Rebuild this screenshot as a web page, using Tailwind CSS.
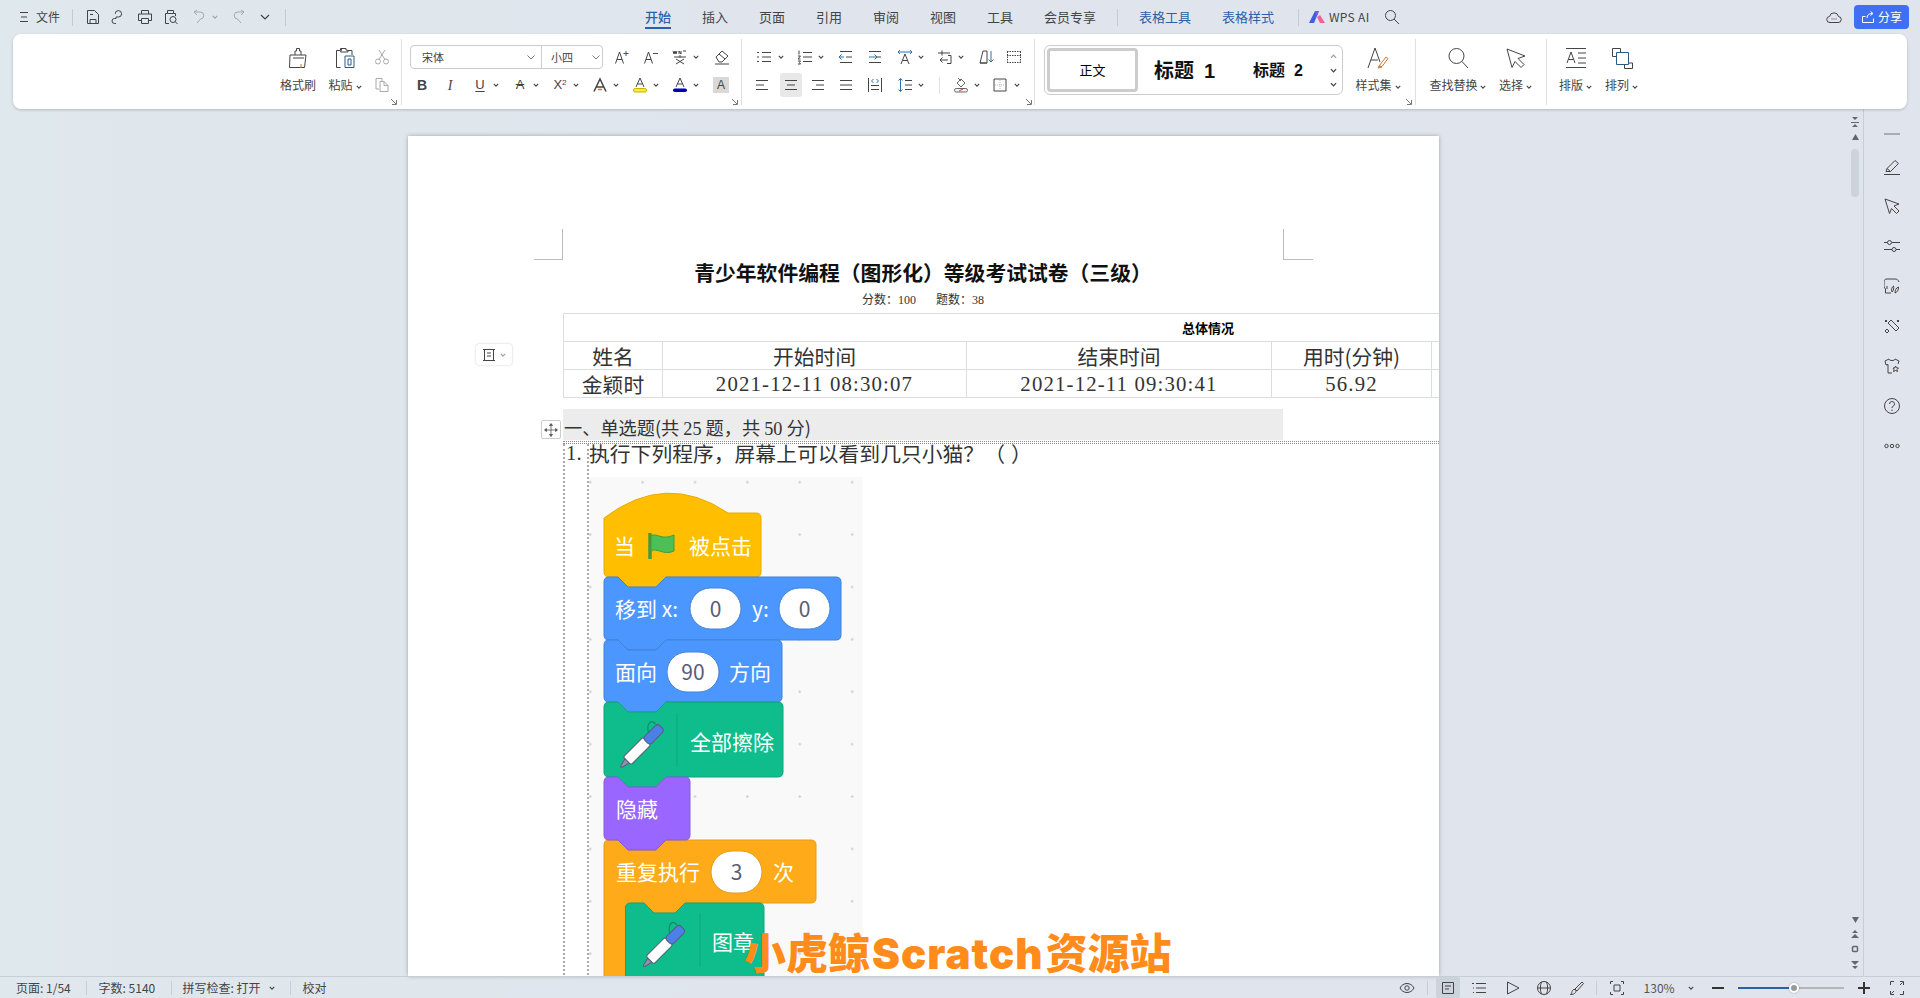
<!DOCTYPE html>
<html lang="zh-CN">
<head>
  <meta charset="UTF-8" />
  <title>WPS 文字</title>
  <script src="https://cdn.jsdelivr.net/npm/@tailwindcss/browser@4"></script>
</head>
<body class="relative w-[1920px] h-[998px] overflow-hidden flex flex-col bg-[linear-gradient(90deg,#dfe8ec,#e0e5ed_40%)] text-[#444] font-['Noto_Sans_CJK_SC','Noto_Sans',sans-serif]">
  <svg class="hidden">
    <symbol id="caret" viewBox="0 0 6 6"><path d="M.8 1.8 3 4.2l2.2-2.4" fill="none" stroke="#444" stroke-width="1.1"/></symbol>
    <symbol id="launch" viewBox="0 0 8 8"><path d="M1 1l5 5M6.5 2v4.5H2" fill="none" stroke="#777"/></symbol>
  </svg>

  <!-- title bar -->
  <header class="h-[34px] shrink-0 flex items-center pl-[20px] text-[12px]">
    <svg class="w-[8px] h-[10px]" viewBox="0 0 8 10" stroke="#444"><path d="M0 .5h8M1 5h6M0 9.5h8"/></svg>
    <span class="ml-[8px] w-[24px]">文件</span>
    <span class="ml-[12px] w-px h-[17px] bg-[#c5cbd2]"></span>
    <svg class="ml-[12px] w-[16px] h-[16px]" viewBox="0 0 16 16" fill="none" stroke="#444"><path d="M2.5 1.5h7l4 4v9h-11zM5 14.5v-4h6v4M5 5.5h3"/></svg>
    <svg class="ml-[9px] w-[16px] h-[16px]" viewBox="0 0 16 16" fill="none" stroke="#444"><path d="M6 9.5V8h2.5a3.2 3.2 0 1 0-3.3-3.2M6 9.5H4.5a2.5 2.5 0 0 0 0 5H6"/></svg>
    <svg class="ml-[11px] w-[16px] h-[16px]" viewBox="0 0 16 16" fill="none" stroke="#444"><path d="M4.5 5V1.5h7V5M4.5 11.5h-3V5h13v6.500h-3M4.500 9.500h7v5h-7z"/></svg>
    <svg class="ml-[10px] w-[16px] h-[16px]" viewBox="0 0 16 16" fill="none" stroke="#444"><path d="M6 14.500H2.500V4.500h2V1.500h6v3h2V7M4.500 4.500h6"/><circle cx="10" cy="10.500" r="3"/><path d="m12.200 12.700 2.300 2.300"/></svg>
    <svg class="ml-[12px] w-[16px] h-[16px]" viewBox="0 0 16 16" fill="none" stroke="#a3a9b0"><path d="M3 3h6a3.500 3.500 0 0 1 .5 7L6 14M3 3l3-2M3 3l3 3"/></svg>
    <svg class="ml-[5px] w-[6px] h-[6px] opacity-40"><use href="#caret"/></svg>
    <svg class="ml-[13px] w-[16px] h-[16px]" viewBox="0 0 16 16" fill="none" stroke="#a3a9b0"><path d="M13 3H7a3.500 3.500 0 0 0-.5 7l3.500 4M13 3l-3-2M13 3l-3 3"/></svg>
    <svg class="ml-[12px] w-[12px] h-[12px]" viewBox="0 0 12 12" fill="none" stroke="#444" stroke-width="1.200"><path d="m2 4 4 4 4-4"/></svg>
    <span class="ml-[14px] w-px h-[17px] bg-[#c5cbd2]"></span>

    <nav class="contents text-[13px]">
      <a class="ml-[359px] relative w-[26px] font-medium text-[#2b5fa8]">开始<span class="absolute left-0 right-0 top-[20px] h-[2px] bg-[#2b5fa8]"></span></a>
      <a class="ml-[31px] w-[26px]">插入</a>
      <a class="ml-[31px] w-[26px]">页面</a>
      <a class="ml-[31px] w-[26px]">引用</a>
      <a class="ml-[31px] w-[26px]">审阅</a>
      <a class="ml-[31px] w-[26px]">视图</a>
      <a class="ml-[31px] w-[26px]">工具</a>
      <a class="ml-[31px] w-[52px]">会员专享</a>
      <span class="ml-[21px] w-px h-[17px] bg-[#c5cbd2]"></span>
      <a class="ml-[21px] w-[52px] text-[#2b5fa8]">表格工具</a>
      <a class="ml-[31px] w-[52px] text-[#2b5fa8]">表格样式</a>
      <span class="ml-[24px] w-px h-[17px] bg-[#c5cbd2]"></span>
    </nav>
    <svg class="ml-[10px] w-[16px] h-[14px]" viewBox="0 0 16 14"><path d="M0 13 6 1h4L5 13z" fill="#3d5fe0"/><path d="M6 1h4l-2 5z" fill="#7b5cf0"/><path d="m8 7 3 6h5l-5-8z" fill="#f0609a"/></svg>
    <span class="ml-[4px] w-[40px] text-[12px] tracking-[.3px] whitespace-nowrap">WPS AI</span>
    <svg class="ml-[15px] w-[16px] h-[16px]" viewBox="0 0 16 16" fill="none" stroke="#444"><circle cx="6.500" cy="6.500" r="5"/><path d="m10 10 5 5"/></svg>
    <svg class="ml-auto w-[16px] h-[14px]" viewBox="0 0 16 14" fill="none" stroke="#444"><path d="M4 12.500a3 3 0 0 1-.5-6 4.600 4.600 0 0 1 9 0 3 3 0 0 1-.5 6z"/><path d="M5.500 9h1M7.500 9h1M9.500 9h1"/></svg>
    <a class="ml-[12px] mr-[11px] w-[55px] h-[24px] rounded-[4px] bg-[#3f6ff2] text-white flex items-center justify-center gap-[3px]">
      <svg class="w-[14px] h-[14px]" viewBox="0 0 14 14" fill="none" stroke="#fff"><path d="M12.500 8.500v4h-11v-6h3M6 8c0-3 2-4.500 5-4.500M9.500 1.500l2.500 2-2.500 2"/></svg>
      分享
    </a>
  </header>

  <!-- ribbon -->
  <section class="relative z-10 ml-[13px] w-[1894px] h-[75px] shrink-0 flex items-start rounded-[8px] bg-white shadow-[0_1px_3px_rgba(0,0,0,.2)] pl-[267px] text-[12px]">
    <div class="w-[36px] flex flex-col items-center pt-[13px]">
      <svg class="w-[22px] h-[22px]" viewBox="0 0 22 22" fill="none" stroke="#444"><path d="M8 8V4h1.500V1.500h3V4H14v4M3 8h16l-1.500 12.500h-15zM6 11h11" /><path d="M14 21v-4" stroke="#c77a3a"/></svg>
      <span class="mt-[8px] leading-[16px] whitespace-nowrap">格式刷</span>
    </div>
    <div class="ml-[12px] w-[34px] flex flex-col items-center pt-[13px]">
      <svg class="w-[22px] h-[22px]" viewBox="0 0 22 22" fill="none" stroke="#444"><path d="M6.500 20.500h-4V3.500h4M14 3.500h4V8M6.500 3.500V1.500h2M8 1.500h4V3l2 .5V5H6.500z"/><path d="M11 9h9v11.500h-9z" stroke="#2c5a85"/><path d="M14 12v6h3v-6z" stroke="#2c5a85"/></svg>
      <span class="mt-[8px] leading-[16px] whitespace-nowrap">粘贴<svg class="inline w-[6px] h-[6px] ml-[3px]"><use href="#caret"/></svg></span>
    </div>
    <div class="ml-[10px] w-[20px] flex flex-col items-center pt-[15px] gap-[12px]">
      <svg class="w-[16px] h-[16px]" viewBox="0 0 16 16" fill="none" stroke="#aaa"><circle cx="4" cy="12.500" r="2.500"/><circle cx="12" cy="12.500" r="2.500"/><path d="M5 10.500 11 1M11 10.500 5 1"/></svg>
      <svg class="w-[16px] h-[16px]" viewBox="0 0 16 16" fill="none" stroke="#aaa"><path d="M5 12H2V1.500h6V4M6 4.500h4l4 4v6H6zM10 4.500v4h4"/></svg>
    </div>
    <span class="ml-[9px] mt-[5px] w-px h-[66px] bg-[#dde1e6]"></span>
    <svg class="absolute left-[377px] top-[64px] w-[8px] h-[8px]"><use href="#launch"/></svg>

    <!-- font group -->
    <div class="ml-[8px] w-[331px] pt-[11px]">
      <div class="h-[24px] flex items-center">
        <div class="w-[193px] h-[24px] flex items-center rounded-[4px] border border-[#ccc] text-[11px]">
          <span class="pl-[11px] w-[115px]">宋体</span>
          <svg class="w-[10px] h-[10px]" viewBox="0 0 10 10" fill="none" stroke="#777"><path d="m1.500 3.500 3.500 3.500 3.500-3.500"/></svg>
          <span class="ml-[5px] w-px h-full bg-[#ccc]"></span>
          <span class="pl-[9px] w-[49px]">小四</span>
          <svg class="w-[10px] h-[10px]" viewBox="0 0 10 10" fill="none" stroke="#777"><path d="m1.500 3.500 3.500 3.500 3.500-3.500"/></svg>
        </div>
        <svg class="ml-[11px] w-[16px] h-[16px]" viewBox="0 0 16 16" fill="none" stroke="#444"><path d="M1.500 14.500 5.500 3l4 11.500M3 10.500h5"/><path d="M9.500 4.500h5M12 2v5" stroke="#2c5a85"/></svg>
        <svg class="ml-[13px] w-[16px] h-[16px]" viewBox="0 0 16 16" fill="none" stroke="#444"><path d="M1.500 14.500 5.500 3l4 11.500M3 10.500h5"/><path d="M10 4.500h5" stroke="#2c5a85"/></svg>
        <svg class="ml-[13px] w-[16px] h-[16px]" viewBox="0 0 16 16" fill="none" stroke="#444"><path d="M1 2l1 3 1-3 1 3 1-3M7 5V2l2 3V2M11 2h3M2 8h12M8 6v3M4 10l8 5M12 10l-8 5"/></svg>
        <svg class="ml-[5px] w-[6px] h-[6px]"><use href="#caret"/></svg>
        <svg class="ml-[15px] w-[16px] h-[16px]" viewBox="0 0 16 16" fill="none" stroke="#444"><path d="m2 8 6-6 6 5-6 6H5zM5 5l6 5M1 15h14"/></svg>
      </div>
      <div class="mt-[4px] h-[24px] flex items-center font-['Liberation_Sans',sans-serif]">
        <span class="ml-[4px] w-[16px] text-center text-[14px] font-bold">B</span>
        <span class="ml-[12px] w-[16px] text-center text-[14px] italic font-['Liberation_Serif',serif]">I</span>
        <span class="ml-[14px] w-[16px] text-center text-[13px] underline underline-offset-2">U</span>
        <svg class="ml-[5px] w-[6px] h-[6px]"><use href="#caret"/></svg>
        <span class="ml-[13px] w-[16px] text-center text-[13px] line-through">A</span>
        <svg class="ml-[5px] w-[6px] h-[6px]"><use href="#caret"/></svg>
        <span class="ml-[13px] w-[16px] text-center text-[13px]">X<sup class="text-[8px]">2</sup></span>
        <svg class="ml-[5px] w-[6px] h-[6px]"><use href="#caret"/></svg>
        <svg class="ml-[13px] w-[16px] h-[16px]" viewBox="0 0 16 16" fill="none" stroke="#444" stroke-width="1.500"><path d="M2 14.500 8 2l6 12.500M4.500 10h7"/><path d="M6 12.500h4" stroke="#c77a3a"/></svg>
        <svg class="ml-[5px] w-[6px] h-[6px]"><use href="#caret"/></svg>
        <svg class="ml-[13px] w-[16px] h-[16px]" viewBox="0 0 16 16" fill="none"><path d="M4 10 8 1l4 9M5.500 7h5" stroke="#444"/><rect x="1.500" y="11.500" width="13" height="3.500" rx="1.700" fill="#ffe93b" stroke="#c9b400"/></svg>
        <svg class="ml-[5px] w-[6px] h-[6px]"><use href="#caret"/></svg>
        <svg class="ml-[13px] w-[16px] h-[16px]" viewBox="0 0 16 16" fill="none"><path d="M4 10 8 1l4 9M5.500 7h5" stroke="#444"/><rect x="1" y="11.500" width="14" height="3.500" rx="1.700" fill="#0000b8"/></svg>
        <svg class="ml-[5px] w-[6px] h-[6px]"><use href="#caret"/></svg>
        <span class="ml-[14px] w-[16px] h-[16px] bg-[#d9d9d9] text-center text-[12px] leading-[16px]">A</span>
      </div>
    </div>
    <span class="mt-[5px] w-px h-[66px] bg-[#dde1e6]"></span>
    <svg class="absolute left-[718px] top-[64px] w-[8px] h-[8px]"><use href="#launch"/></svg>

    <!-- paragraph group -->
    <div class="w-[292px] pt-[11px]">
      <div class="h-[24px] flex items-center">
        <svg class="ml-[14px] w-[16px] h-[16px]" viewBox="0 0 16 16" fill="none" stroke="#444"><path d="M6 3.500h9M6 8h9M6 12.500h9M1 3.500h2M1 8h2M1 12.500h2" /></svg>
        <svg class="ml-[6px] w-[6px] h-[6px]"><use href="#caret"/></svg>
        <svg class="ml-[13px] w-[16px] h-[16px]" viewBox="0 0 16 16" fill="none" stroke="#444"><path d="M6 3.500h9M6 8h9M6 12.500h9M2 1.500v4M1 7h2.500L1 10h2.500M1 12h2.500l-1 1.500 1 1.500H1"/></svg>
        <svg class="ml-[5px] w-[6px] h-[6px]"><use href="#caret"/></svg>
        <svg class="ml-[14px] w-[16px] h-[16px]" viewBox="0 0 16 16" fill="none" stroke="#444"><path d="M2 2.500h12M8 8h6M2 13.500h12"/><path d="M6 8H1M3.500 5.500 1 8l2.500 2.500" stroke="#2f6fb5"/></svg>
        <svg class="ml-[13px] w-[16px] h-[16px]" viewBox="0 0 16 16" fill="none" stroke="#444"><path d="M2 2.500h12M10 8h4M2 13.500h12"/><path d="M2 8h8M7.500 5.500 10 8l-2.500 2.500" stroke="#2f6fb5"/></svg>
        <svg class="ml-[14px] w-[16px] h-[16px]" viewBox="0 0 16 16" fill="none" stroke="#444"><path d="M4 15 8 5l4 10M5.500 11.500h5"/><path d="M1 3h14M3 1 1 3l2 2M13 1l2 2-2 2" stroke="#2f6fb5"/></svg>
        <svg class="ml-[5px] w-[6px] h-[6px]"><use href="#caret"/></svg>
        <svg class="ml-[13px] w-[16px] h-[16px]" viewBox="0 0 16 16" fill="none" stroke="#444"><path d="M5 1.500v5M1 4h12M11 11H3M5.500 8.500 3 11l2.500 2.500M11 6.500h3M14 6.500v8h-4"/></svg>
        <svg class="ml-[5px] w-[6px] h-[6px]"><use href="#caret"/></svg>
        <svg class="ml-[15px] w-[16px] h-[16px]" viewBox="0 0 16 16" fill="none" stroke="#444"><path d="M1 14 4 2h4v12zM1 14h7"/><path d="M12 2v11M9.500 10.500 12 13l2.500-2.500" stroke="#2f6fb5"/></svg>
        <svg class="ml-[11px] w-[16px] h-[16px]" viewBox="0 0 16 16" fill="none" stroke="#444" stroke-dasharray="1.500 1"><path d="M1 2.500h14M1 13.500h14M1.500 2.500v11M14.500 2.500v11"/><path d="M1 6.500h14" /></svg>
      </div>
      <div class="mt-[4px] h-[24px] flex items-center">
        <svg class="ml-[12px] w-[16px] h-[16px]" viewBox="0 0 16 16" stroke="#444"><path d="M2 3.500h12M2 8h8M2 12.500h12"/></svg>
        <span class="ml-[10px] w-[22px] h-[24px] rounded-[3px] bg-[#e8e8e8] flex items-center justify-center">
          <svg class="w-[16px] h-[16px]" viewBox="0 0 16 16" stroke="#444"><path d="M2 3.500h12M4 8h8M2 12.500h12"/></svg>
        </span>
        <svg class="ml-[8px] w-[16px] h-[16px]" viewBox="0 0 16 16" stroke="#444"><path d="M2 3.500h12M6 8h8M2 12.500h12"/></svg>
        <svg class="ml-[12px] w-[16px] h-[16px]" viewBox="0 0 16 16" stroke="#444"><path d="M2 3.500h12M2 8h12M2 12.500h12"/></svg>
        <svg class="ml-[13px] w-[16px] h-[16px]" viewBox="0 0 16 16" fill="none" stroke="#444"><path d="M1.500 1v14M14.500 1v14M4 8.500h8M4 12.500h8"/><path d="M6.500 2 4.500 4l2 2M9.500 2l2 2-2 2" stroke="#2f6fb5"/></svg>
        <svg class="ml-[14px] w-[16px] h-[16px]" viewBox="0 0 16 16" fill="none" stroke="#444"><path d="M8 3.500h7M8 8h7M8 12.500h7"/><path d="M3.500 1.500v13M1.500 3.500l2-2 2 2M1.500 12.500l2 2 2-2" stroke="#2f6fb5"/></svg>
        <svg class="ml-[5px] w-[6px] h-[6px]"><use href="#caret"/></svg>
        <span class="ml-[15px] w-px h-[17px] bg-[#dde1e6]"></span>
        <svg class="ml-[13px] w-[16px] h-[16px]" viewBox="0 0 16 16" fill="none" stroke="#666"><path d="m4 6 4-4 4 4-4 4zM5 1l3 3"/><rect x="1.500" y="11.500" width="13" height="3.500" rx="1.700" fill="#f5f5f5"/><path d="m6 14 4-2" stroke="#d33"/></svg>
        <svg class="ml-[5px] w-[6px] h-[6px]"><use href="#caret"/></svg>
        <svg class="ml-[12px] w-[16px] h-[16px]" viewBox="0 0 16 16" fill="none" stroke="#444"><path d="M2 2h12v12H2z"/><path d="M8 3v10M3 8h10" stroke="#bbb" stroke-dasharray="1 1"/></svg>
        <svg class="ml-[6px] w-[6px] h-[6px]"><use href="#caret"/></svg>
      </div>
    </div>
    <span class="mt-[5px] w-px h-[66px] bg-[#dde1e6]"></span>
    <svg class="absolute left-[1012px] top-[64px] w-[8px] h-[8px]"><use href="#launch"/></svg>

    <!-- styles gallery -->
    <div class="ml-[9px] mt-[11px] w-[299px] h-[50px] rounded-[6px] border border-[#ccc] flex items-center pl-[2px]">
      <span class="w-[91px] h-[44px] rounded-[4px] border-[3px] border-[#ccc] flex items-center justify-center text-[13px] text-black">正文</span>
      <span class="ml-[16px] w-[66px] whitespace-nowrap text-[20px] font-bold text-[#111]">标题<span class="ml-[10px] font-['Liberation_Sans',sans-serif]">1</span></span>
      <span class="ml-[33px] w-[54px] whitespace-nowrap text-[16px] font-bold text-[#111]">标题<span class="ml-[9px] font-['Liberation_Sans',sans-serif]">2</span></span>
      <span class="ml-[23px] flex flex-col items-center gap-[7px]">
        <svg class="w-[7px] h-[7px] rotate-180 opacity-50"><use href="#caret"/></svg>
        <svg class="w-[7px] h-[7px]"><use href="#caret"/></svg>
        <svg class="w-[7px] h-[7px]"><use href="#caret"/></svg>
      </span>
    </div>
    <div class="ml-[12px] w-[46px] flex flex-col items-center pt-[13px]">
      <svg class="w-[22px] h-[22px]" viewBox="0 0 22 22" fill="none" stroke="#444"><path d="M1 21 8 1l5 14M4 13h7"/><path d="m12 19 7-9 2 1.500-6 8zM11 21l1-2 3 1z" stroke="#c77a3a"/></svg>
      <span class="mt-[8px] leading-[16px] whitespace-nowrap">样式集<svg class="inline w-[6px] h-[6px] ml-[3px]"><use href="#caret"/></svg></span>
    </div>
    <span class="ml-[13.500px] mt-[5px] w-px h-[66px] bg-[#dde1e6]"></span>
    <svg class="absolute left-[1392px] top-[64px] w-[8px] h-[8px]"><use href="#launch"/></svg>

    <div class="ml-[13px] w-[58px] flex flex-col items-center pt-[13px]">
      <svg class="w-[22px] h-[22px]" viewBox="0 0 22 22" fill="none" stroke="#444"><circle cx="9.500" cy="9" r="7.500"/><path d="m15 14.500 6 6.500"/></svg>
      <span class="mt-[8px] leading-[16px] whitespace-nowrap">查找替换<svg class="inline w-[6px] h-[6px] ml-[2px]"><use href="#caret"/></svg></span>
    </div>
    <div class="ml-[12px] w-[34px] flex flex-col items-center pt-[13px]">
      <svg class="w-[22px] h-[22px]" viewBox="0 0 22 22" fill="none" stroke="#444"><path d="m2 2 18 7-7 2.500 6 6-3 3-6-6-3 6z"/></svg>
      <span class="mt-[8px] leading-[16px] whitespace-nowrap">选择<svg class="inline w-[6px] h-[6px] ml-[3px]"><use href="#caret"/></svg></span>
    </div>
    <span class="ml-[13px] mt-[5px] w-px h-[66px] bg-[#dde1e6]"></span>
    <div class="ml-[12px] w-[34px] flex flex-col items-center pt-[13px]">
      <svg class="w-[22px] h-[22px]" viewBox="0 0 22 22" fill="none" stroke="#444"><path d="M1 1.500h20M1 20.500h20M2 16l4-11 4 11M3.500 12.500h5M13 6h8M13 11h8M13 16h8"/></svg>
      <span class="mt-[8px] leading-[16px] whitespace-nowrap">排版<svg class="inline w-[6px] h-[6px] ml-[3px]"><use href="#caret"/></svg></span>
    </div>
    <div class="ml-[12px] w-[34px] flex flex-col items-center pt-[13px]">
      <svg class="w-[22px] h-[22px]" viewBox="0 0 22 22" fill="none" stroke="#444"><path d="M1.500 1.500h8v4M5 9.500H1.500v-8M17 16h4.500v5.500h-8V18"/><path d="M5.500 5.500h12v12h-12z" stroke="#2c5a85"/></svg>
      <span class="mt-[8px] leading-[16px] whitespace-nowrap">排列<svg class="inline w-[6px] h-[6px] ml-[3px]"><use href="#caret"/></svg></span>
    </div>
  </section>

  <!-- workspace -->
  <main class="flex-1 min-h-0 flex">
    <div class="flex w-[1863px]">
      <article class="relative ml-[408px] w-[1031px] mt-[27px] bg-white shadow-[0_0_4px_rgba(0,0,0,.3)] overflow-hidden pl-[155px] pt-[121px] text-[#333]">
        <span class="absolute left-[126px] top-[93px] w-[29px] h-[31px] border-r border-b border-[#bbb]"></span>
        <span class="absolute left-[875px] top-[93px] w-[30px] h-[31px] border-l border-b border-[#bbb]"></span>
        <span class="absolute left-[68px] top-[208px] w-[36px] h-[21px] rounded-[3px] bg-white shadow-[0_0_2px_rgba(0,0,0,.25)] flex items-center justify-center gap-[4px]">
          <svg class="w-[14px] h-[14px]" viewBox="0 0 14 14" fill="none" stroke="#444"><path d="M2.500 1.500h9v11h-9zM5 5h4M5 8h4M1 1.500h3M1 12.500h3M10 1.500h3M10 12.500h3"/></svg>
          <svg class="w-[6px] h-[6px] opacity-50"><use href="#caret"/></svg>
        </span>
        <span class="absolute left-[133px] top-[284px] w-[20px] h-[19px] rounded-[2px] border border-[#ccc] bg-white flex items-center justify-center">
          <svg class="w-[14px] h-[14px]" viewBox="0 0 14 14" fill="#555" stroke="#555" stroke-width=".8"><path d="M7 1v12M1 7h12" fill="none"/><path d="M7 .5 5.500 2.500h3zM7 13.500l-1.500-2h3zM.5 7l2-1.500v3zM13.500 7l-2-1.500v3z"/></svg>
        </span>

        <h1 class="w-[720px] text-center text-[20.800px] leading-[30px] font-bold text-[#111]">青少年软件编程（图形化）等级考试试卷（三级）</h1>
        <p class="w-[720px] mt-[4px] text-center text-[12px] leading-[16px]">分数：<span class="font-['Liberation_Serif',serif]">100</span><span class="inline-block w-[20px]"></span>题数：<span class="font-['Liberation_Serif',serif]">38</span></p>

        <table class="mt-[5px] w-[1290px] table-fixed border-collapse text-center text-[20.800px]">
          <colgroup><col class="w-[99px]"><col class="w-[304px]"><col class="w-[305px]"><col class="w-[160px]"><col></colgroup>
          <tr class="h-[28px] border border-[#ddd]"><td colspan="5" class="text-[13px] font-bold text-black leading-[26px]">总体情况</td></tr>
          <tr class="h-[28px] leading-[26px]">
            <td class="border border-[#ddd]">姓名</td><td class="border border-[#ddd]">开始时间</td><td class="border border-[#ddd]">结束时间</td><td class="border border-[#ddd]">用时(分钟)</td><td class="border border-[#ddd]"></td>
          </tr>
          <tr class="h-[28px] leading-[26px]">
            <td class="border border-[#ddd]">金颖时</td>
            <td class="border border-[#ddd] font-['Liberation_Serif',serif] tracking-[1.150px]">2021-12-11 08:30:07</td>
            <td class="border border-[#ddd] font-['Liberation_Serif',serif] tracking-[1.150px]">2021-12-11 09:30:41</td>
            <td class="border border-[#ddd] font-['Liberation_Serif',serif] tracking-[1.150px]">56.92</td>
            <td class="border border-[#ddd]"></td>
          </tr>
        </table>

        <div class="mt-[11px] w-[720px] h-[31px] bg-[#ececec] pl-[1px] pt-[5px] text-[18.200px] leading-[26px] whitespace-nowrap">一、单选题(共 <span class="font-['Liberation_Serif',serif]">25</span> 题，共 <span class="font-['Liberation_Serif',serif]">50</span> 分)</div>

        <div class="border-t border-dotted border-[#888] mt-[1px] w-[876px]">
          <div class="mt-[1px] flex border-t border-dotted border-[#888] h-[540px]">
            <div class="w-[24px] pl-[1px] border-l-2 border-dotted border-[#aaa] font-['Liberation_Serif',serif] text-[20.800px] leading-[18px]">1.</div>
            <div class="border-l-2 border-dotted border-[#aaa]">
              <p class="text-[20.800px] leading-[18px] whitespace-nowrap">执行下列程序，屏幕上可以看到几只小猫？（<span class="inline-block w-[6px]"></span>）</p>
              <div class="mt-[15px] w-[274px] h-[499px] bg-[#f9f9f9] bg-[radial-gradient(circle,#d4d4d4_1px,transparent_1.500px)] bg-[size:52.400px_52.400px] bg-[position:-25px_-21px]">
                <svg class="block w-[274px] h-[499px] font-['Noto_Sans_CJK_SC',sans-serif]" viewBox="588 477 274 499" font-size="21" fill="#fff">
                  <!-- orange loop goes first, inner block on top -->
                  <path d="M603 845Q603 840 608 840L617 840L627 850L655 850L665 840L810 840Q815 840 815 845L815 898Q815 903 810 903L684 903L674 913L653 913L643 903L630 903Q624.500 903 624.500 908L624.500 1000L603 1000Z" fill="#ffab19" stroke="#e69a17"/>
                  <path d="M603 518Q665 471 727 513L755 513Q760 513 760 518L760 572Q760 577 755 577L665 577L655 587L627 587L617 577L608 577Q603 577 603 572Z" fill="#ffbf00" stroke="#e6ac00"/>
                  <path d="M603 582Q603 577 608 577L617 577L627 587L655 587L665 577L835 577Q840 577 840 582L840 635Q840 640 835 640L665 640L655 650L627 650L617 640L608 640Q603 640 603 635Z" fill="#4c97ff" stroke="#4280d7"/>
                  <path d="M603 645Q603 640 608 640L617 640L627 650L655 650L665 640L776 640Q781 640 781 645L781 697Q781 702 776 702L665 702L655 712L627 712L617 702L608 702Q603 702 603 697Z" fill="#4c97ff" stroke="#4280d7"/>
                  <path d="M603 707Q603 702 608 702L617 702L627 712L655 712L665 702L777 702Q782 702 782 707L782 772Q782 777 777 777L665 777L655 787L627 787L617 777L608 777Q603 777 603 772Z" fill="#0fbd8c" stroke="#0da57a"/>
                  <path d="M603 782Q603 777 608 777L617 777L627 787L655 787L665 777L684 777Q689 777 689 782L689 835Q689 840 684 840L665 840L655 850L627 850L617 840L608 840Q603 840 603 835Z" fill="#9966ff" stroke="#855cd6"/>
                  <path d="M624.500 908Q624.500 903 630 903L643 903L653 913L674 913L684 903L758 903Q763 903 763 908L763 1000L624.500 1000Z" fill="#0fbd8c" stroke="#0da57a"/>

                  <text x="613" y="554">当</text>
                  <path d="M649 533V559" stroke="#45993d" stroke-width="3.500"/>
                  <path d="M650 536C656 532 660 541 673 535L673 551C662 556 656 547 650 551Z" fill="#4cbf56" stroke="#45993d"/>
                  <text x="688" y="554">被点击</text>

                  <text x="614" y="617">移到 x:</text>
                  <rect x="689" y="588" width="51" height="41" rx="20.500" fill="#fff" stroke="#4280d7"/>
                  <text x="714.500" y="617" text-anchor="middle" fill="#575e75">0</text>
                  <text x="751" y="617">y:</text>
                  <rect x="778" y="588" width="51" height="41" rx="20.500" fill="#fff" stroke="#4280d7"/>
                  <text x="803.500" y="617" text-anchor="middle" fill="#575e75">0</text>

                  <text x="614" y="680">面向</text>
                  <rect x="666" y="652" width="52" height="40" rx="20" fill="#fff" stroke="#4280d7"/>
                  <text x="692" y="680" text-anchor="middle" fill="#575e75">90</text>
                  <text x="728" y="680">方向</text>

                  <g transform="translate(641 746) rotate(45)">
                    <path d="M-3 21-1 29 0 30 1 29 3 21Z" fill="#8a93b0" stroke="#575e75"/>
                    <rect x="-5.500" y="-7" width="11" height="28" rx="2" fill="#fff" stroke="#575e75"/>
                    <rect x="-5" y="-27" width="10" height="21" rx="3.500" fill="#4c7fe8" stroke="#575e75"/>
                    <path d="M-5-14C-14-20-12-26-6-25" fill="none" stroke="#0b8e69" stroke-width="1.200"/>
                  </g>
                  <path d="M676 713V767" stroke="#0da57a"/>
                  <text x="689" y="750">全部擦除</text>

                  <text x="615" y="817">隐藏</text>

                  <text x="615" y="880">重复执行</text>
                  <rect x="710" y="851" width="51" height="42" rx="21" fill="#fff" stroke="#e69a17"/>
                  <text x="735.500" y="880" text-anchor="middle" fill="#575e75">3</text>
                  <text x="772" y="880">次</text>

                  <g transform="translate(663 946) rotate(45)">
                    <path d="M-3 20-1 28 0 29 1 28 3 20Z" fill="#8a93b0" stroke="#575e75"/>
                    <rect x="-5.500" y="-7" width="11" height="27" rx="2" fill="#fff" stroke="#575e75"/>
                    <rect x="-5" y="-26" width="10" height="20" rx="3.500" fill="#4c7fe8" stroke="#575e75"/>
                    <path d="M-5-13C-14-19-12-25-6-24" fill="none" stroke="#0b8e69" stroke-width="1.200"/>
                  </g>
                  <path d="M699 913V967" stroke="#0da57a"/>
                  <text x="711" y="950">图章</text>
                </svg>
              </div>
            </div>
          </div>
        </div>
      </article>

      <!-- doc scrollbar -->
      <div class="ml-[412px] w-[8px] flex flex-col justify-between items-center pt-[8px] pb-[7px] text-[#666]">
        <div class="flex flex-col items-center">
          <svg class="w-[8px] h-[10px]" viewBox="0 0 8 10" fill="#666"><path d="M1 0h6L4 3zM0 5h8v1H0zM1 10h6L4 7z"/></svg>
          <svg class="mt-[7px] w-[7px] h-[6px]" viewBox="0 0 7 6" fill="#666"><path d="M3.500 0 7 6H0z"/></svg>
          <span class="mt-[9px] w-[8px] h-[48px] rounded-full bg-[#cdd3da]"></span>
        </div>
        <div class="flex flex-col items-center">
          <svg class="w-[7px] h-[6px]" viewBox="0 0 7 6" fill="#666"><path d="M3.500 6 7 0H0z"/></svg>
          <svg class="mt-[7px] w-[8px] h-[9px]" viewBox="0 0 8 9" fill="#666"><path d="M4 0 7 3H1zM4 4l4 4H0z"/></svg>
          <svg class="mt-[6px] w-[8px] h-[8px]" viewBox="0 0 8 8" fill="none" stroke="#666" stroke-width="1.500"><rect x="1.500" y="1.500" width="5" height="5" rx="1"/></svg>
          <svg class="mt-[7px] w-[8px] h-[9px]" viewBox="0 0 8 9" fill="#666"><path d="M4 9 7 6H1zM4 5 8 1H0z"/></svg>
        </div>
      </div>
    </div>

    <!-- right rail -->
    <aside class="w-[57px] border-l border-[#c8ced6] flex flex-col items-center pr-[1px] pt-[17px]">
      <svg class="w-[16px] h-[16px]" viewBox="0 0 16 16" stroke="#999" stroke-width="1.500"><path d="M0 8h16"/></svg>
      <svg class="mt-[17px] w-[16px] h-[16px]" viewBox="0 0 16 16" fill="none" stroke="#444"><path d="M0 15.500h16M2 12.500l1-3 8-8 3.500 3-8 8zM3 9.500l3.500 3"/></svg>
      <svg class="mt-[23px] w-[16px] h-[16px]" viewBox="0 0 16 16" fill="none" stroke="#444"><path d="m1 1 14 5-5 2 5 5-2.500 2.500-5-5-2 5z"/></svg>
      <svg class="mt-[24px] w-[16px] h-[16px]" viewBox="0 0 16 16" fill="none" stroke="#444"><path d="M0 4.500h3.500M8 4.500h8M0 11.500h8M12 11.500h4"/><circle cx="5.500" cy="4.500" r="2"/><circle cx="10" cy="11.500" r="2"/></svg>
      <svg class="mt-[24px] w-[16px] h-[16px]" viewBox="0 0 16 16" fill="none" stroke="#444"><path d="M7 15H1.500V11L0 9V4c0-2 1-3 3-3h8c2 0 3.500 1 4 3"/><path d="M3 11V8M8 14c-1-3 0-5 1.500-6 .5 2 .5 4-1.500 6zM11 15c0-3 1-5 3.500-6 0 3-1 5-3.500 6z"/></svg>
      <svg class="mt-[24px] w-[16px] h-[16px]" viewBox="0 0 16 16" fill="none" stroke="#444"><path d="m4 5 3-3 8 8-3 3zM2 2l1 1-1 1-1-1zM14 2l1 1-1 1-1-1zM3 11l2 2-2 2-2-2z"/></svg>
      <svg class="mt-[24px] w-[16px] h-[16px]" viewBox="0 0 16 16" fill="none" stroke="#444"><path d="M5 1 1 3l1 4 2-.5V15h4M11 1l4 2-1 3M5 1c0 2 6 2 6 0"/><path d="m11.500 8 1 1.800 2 .2-1.500 1.500.5 2-2-1-2 1 .5-2L9 10l2-.2z"/></svg>
      <svg class="mt-[24px] w-[16px] h-[16px]" viewBox="0 0 16 16" fill="none" stroke="#444"><circle cx="8" cy="8" r="7.500"/><path d="M5.500 6a2.500 2.500 0 1 1 3.500 2.300c-.7.300-1 .7-1 1.700M8 11.500v1.500"/></svg>
      <svg class="mt-[24px] w-[16px] h-[16px]" viewBox="0 0 16 16" fill="none" stroke="#444"><circle cx="2.500" cy="8" r="1.700"/><circle cx="8" cy="8" r="1.700"/><circle cx="13.500" cy="8" r="1.700"/></svg>
    </aside>
  </main>

  <!-- status bar -->
  <footer class="relative z-10 h-[22px] shrink-0 flex items-center border-t border-[#c8ced6] pl-[16px] text-[12px] whitespace-nowrap">
    <span class="w-[57px]">页面: 1/54</span>
    <span class="ml-[12.600px] w-px h-[14px] bg-[#c8ced6]"></span>
    <span class="ml-[12px] w-[60px]">字数: 5140</span>
    <span class="ml-[12px] w-px h-[14px] bg-[#c8ced6]"></span>
    <span class="ml-[11px] w-[79px]">拼写检查: 打开</span>
    <svg class="ml-[7px] w-[6px] h-[6px]"><use href="#caret"/></svg>
    <span class="ml-[15px] w-px h-[14px] bg-[#c8ced6]"></span>
    <span class="ml-[12px] w-[24px]">校对</span>

    <svg class="ml-[1072px] w-[16px] h-[16px]" viewBox="0 0 16 16" fill="none" stroke="#444"><path d="M1 8c3-6 11-6 14 0-3 6-11 6-14 0z"/><circle cx="8" cy="8" r="2.200"/></svg>
    <span class="ml-[12px] w-px h-[14px] bg-[#c8ced6]"></span>
    <span class="ml-[8px] w-[24px] h-[21px] bg-[#cdd3da] rounded-[2px] flex items-center justify-center">
      <svg class="w-[14px] h-[14px]" viewBox="0 0 14 14" fill="none" stroke="#444"><path d="M1.500 1.500h11v11h-11zM4 5h6M4 8h4"/></svg>
    </span>
    <svg class="ml-[11px] w-[16px] h-[16px]" viewBox="0 0 16 16" stroke="#444"><path d="M5 3.500h10M5 8h10M5 12.500h10M1 3.500h2M2 8h1M2 12.500h1"/></svg>
    <svg class="ml-[18px] w-[16px] h-[16px]" viewBox="0 0 16 16" fill="none" stroke="#444"><path d="M2.500 2 14 8 2.500 14z"/></svg>
    <svg class="ml-[15px] w-[16px] h-[16px]" viewBox="0 0 16 16" fill="none" stroke="#444"><circle cx="8" cy="8" r="6.500"/><path d="M1.500 8h13M5.500 2c-1.500 3-1.500 9 0 12M10.500 2c1.500 3 1.500 9 0 12"/></svg>
    <svg class="ml-[17px] w-[16px] h-[16px]" viewBox="0 0 16 16" fill="none" stroke="#444"><path d="M6 9 13 2l1.500 1.500L8 11zM1.500 14.500c2 0 4-.5 5-2 .7-1 .7-2-.5-3-1.500-.5-2.500.5-3 2-.2 1.500-.7 2.500-1.500 3z"/></svg>
    <span class="ml-[11px] w-px h-[14px] bg-[#c8ced6]"></span>
    <svg class="ml-[12px] w-[16px] h-[16px]" viewBox="0 0 16 16" fill="none" stroke="#444"><path d="M4 1.500H1.500V4M12 1.500h2.500V4M4 14.500H1.500V12M12 14.500h2.500V12M5 5h6v6H5z"/></svg>
    <span class="ml-[19px] w-[32px] text-[#555]">130%</span>
    <svg class="ml-[12px] w-[6px] h-[6px]"><use href="#caret"/></svg>
    <span class="ml-[18px] w-[12px] h-[2px] bg-[#333]"></span>
    <div class="relative ml-[14px] w-[106px] h-[2px] bg-[#b5b5b5]">
      <span class="block w-[56px] h-[2px] bg-[#2b5fa8]"></span>
      <span class="absolute left-[51px] top-[-4px] w-[10px] h-[10px] rounded-full bg-[#999] border-[2px] border-white shadow-[0_0_2px_rgba(0,0,0,.3)]"></span>
    </div>
    <svg class="ml-[14px] w-[12px] h-[12px]" viewBox="0 0 12 12" stroke="#333" stroke-width="2"><path d="M0 6h12M6 0v12"/></svg>
    <svg class="ml-[19px] w-[16px] h-[16px]" viewBox="0 0 16 16" fill="none" stroke="#444"><path d="M1.500 5V1.500H5M11 1.500h3.500V5M1.500 11v3.500H5M11 14.500h3.500V11M11 5l2.500-2.500M5 11l-2.500 2.500"/></svg>
  </footer>

  <div class="absolute left-[744px] top-[926px] z-20 text-[42px] leading-[50px] font-black text-[#ff8c1a] whitespace-nowrap font-['Noto_Sans_CJK_SC',sans-serif]">小虎鲸<span class="font-['Inter',sans-serif] ml-[2px] mr-[2px] tracking-[1px]">Scratch</span>资源站</div>
</body>
</html>
